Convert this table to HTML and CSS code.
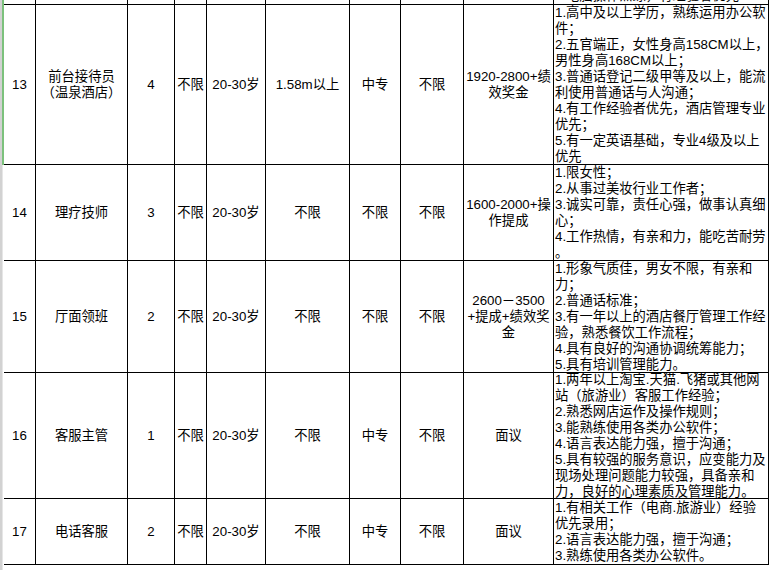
FILE: index.html
```html
<!DOCTYPE html>
<html lang="zh-CN">
<head>
<meta charset="utf-8">
<title>招聘岗位表</title>
<link rel="stylesheet" href="styles.css">
</head>
<body>
<div class="page">
  <div class="gutter">
    <div class="gutter-sel"></div>
    <div class="gutter-rest"></div>
  </div>
  <div class="sheet">
    <!-- row 12 (cut off) -->
    <div class="c cut"></div><div class="c cut"></div><div class="c cut"></div><div class="c cut"></div><div class="c cut"></div>
    <div class="c cut"></div><div class="c cut"></div><div class="c cut"></div><div class="c cut"></div>
    <div class="c cut req">3.电脑操作熟练，有经验者优先</div>

    <!-- row 13 -->
    <div class="c">13</div>
    <div class="c">前台接待员<br>（温泉酒店）</div>
    <div class="c">4</div>
    <div class="c">不限</div>
    <div class="c">20-30岁</div>
    <div class="c">1.58m以上</div>
    <div class="c">中专</div>
    <div class="c">不限</div>
    <div class="c">1920-2800+绩<br>效奖金</div>
    <div class="c req">1.高中及以上学历，熟练运用办公软<br>件；<br>2.五官端正，女性身高158CM以上，<br>男性身高168CM以上；<br>3.普通话登记二级甲等及以上，能流<br>利使用普通话与人沟通；<br>4.有工作经验者优先，酒店管理专业<br>优先；<br>5.有一定英语基础，专业4级及以上<br>优先</div>

    <!-- row 14 -->
    <div class="c">14</div>
    <div class="c">理疗技师</div>
    <div class="c">3</div>
    <div class="c">不限</div>
    <div class="c">20-30岁</div>
    <div class="c">不限</div>
    <div class="c">不限</div>
    <div class="c">不限</div>
    <div class="c">1600-2000+操<br>作提成</div>
    <div class="c req">1.限女性；<br>2.从事过美妆行业工作者；<br>3.诚实可靠，责任心强，做事认真细<br>心；<br>4.工作热情，有亲和力，能吃苦耐劳<br>。</div>

    <!-- row 15 -->
    <div class="c">15</div>
    <div class="c">厅面领班</div>
    <div class="c">2</div>
    <div class="c">不限</div>
    <div class="c">20-30岁</div>
    <div class="c">不限</div>
    <div class="c">不限</div>
    <div class="c">不限</div>
    <div class="c">2600－3500<br>+提成+绩效奖<br>金</div>
    <div class="c req">1.形象气质佳，男女不限，有亲和<br>力；<br>2.普通话标准；<br>3.有一年以上的酒店餐厅管理工作经<br>验，熟悉餐饮工作流程；<br>4.具有良好的沟通协调统筹能力；<br>5.具有培训管理能力。</div>

    <!-- row 16 -->
    <div class="c">16</div>
    <div class="c">客服主管</div>
    <div class="c">1</div>
    <div class="c">不限</div>
    <div class="c">20-30岁</div>
    <div class="c">不限</div>
    <div class="c">中专</div>
    <div class="c">不限</div>
    <div class="c">面议</div>
    <div class="c req">1.两年以上淘宝.天猫.飞猪或其他网<br>站（旅游业）客服工作经验；<br>2.熟悉网店运作及操作规则；<br>3.能熟练使用各类办公软件；<br>4.语言表达能力强，擅于沟通；<br>5.具有较强的服务意识，应变能力及<br>现场处理问题能力较强，具备亲和<br>力，良好的心理素质及管理能力。</div>

    <!-- row 17 -->
    <div class="c">17</div>
    <div class="c">电话客服</div>
    <div class="c">2</div>
    <div class="c">不限</div>
    <div class="c">20-30岁</div>
    <div class="c">不限</div>
    <div class="c">中专</div>
    <div class="c">不限</div>
    <div class="c">面议</div>
    <div class="c req">1.有相关工作（电商.旅游业）经验<br>优先录用；<br>2.语言表达能力强，擅于沟通；<br>3.熟练使用各类办公软件。</div>
  </div>
</div>
</body>
</html>
```

FILE: styles.css
```css
html, body {
  margin: 0;
  padding: 0;
  height: 100%;
  background: #ffffff;
  overflow: hidden;
}

.page {
  display: flex;
  height: 570px;
  font-family: "Liberation Sans", "Noto Sans CJK SC", sans-serif;
  font-size: 13.3px;
  line-height: 16px;
  color: #000000;
}

.gutter {
  width: 4px;
  display: flex;
  flex-direction: column;
  flex: none;
}

.gutter-sel {
  height: 165px;
  border-left: 2px solid #d2d2d2;
  background: #7cc17c;
  box-sizing: border-box;
}

.gutter-rest {
  flex: 1;
  border-left: 2px solid #d2d2d2;
  border-right: 1px solid #ffffff;
  background: #e6e6e6;
  box-sizing: border-box;
}

.sheet {
  display: grid;
  grid-template-columns: 32px 92px 47px 32px 59px 84px 51px 63px 90px 215px;
  grid-template-rows: 5px 160px 96px 112px 126px 66px;
  align-content: start;
}

.c {
  box-sizing: border-box;
  border-right: 1px solid #000000;
  border-bottom: 1px solid #000000;
  display: flex;
  align-items: center;
  justify-content: center;
  text-align: center;
  white-space: nowrap;
  overflow: visible;
}

.c.req {
  justify-content: flex-start;
  text-align: left;
  padding-left: 1px;
}

.c.cut {
  align-items: flex-end;
  overflow: hidden;
}
```
